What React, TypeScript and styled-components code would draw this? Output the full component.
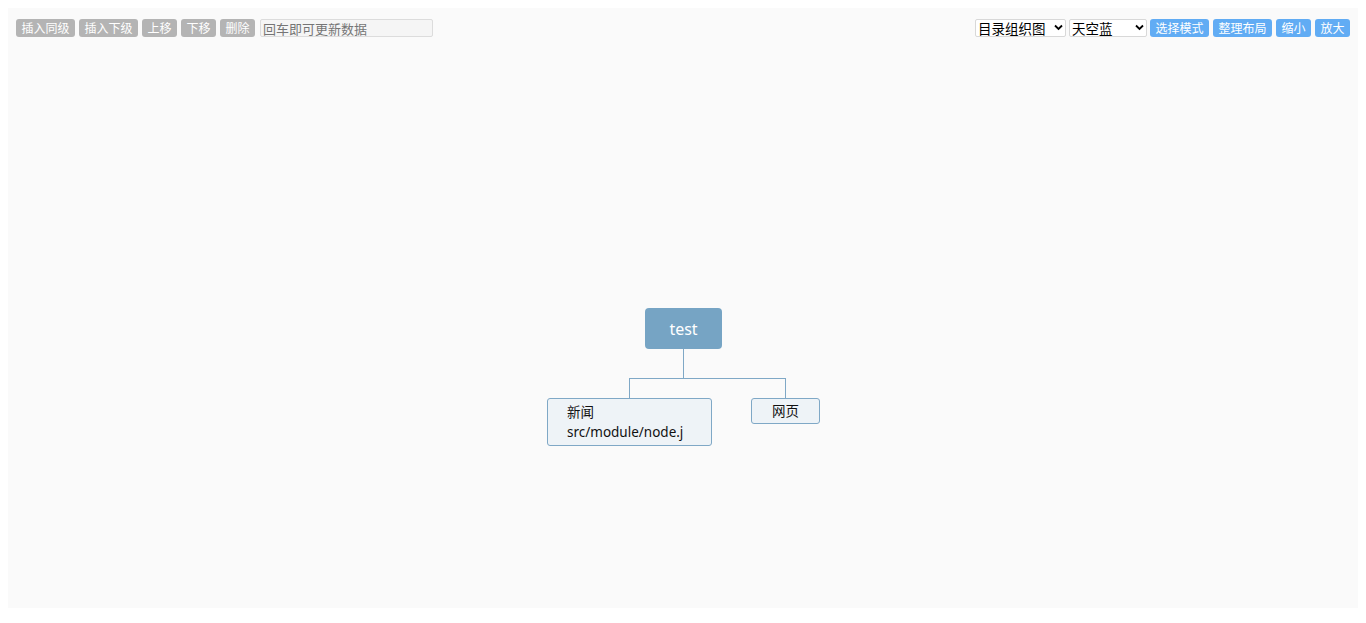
import React from "react";
import styled, { createGlobalStyle } from "styled-components";

const Global = createGlobalStyle`
  html, body { margin: 0; padding: 0; background: #ffffff; }
  body { padding: 8px; font-family: "Noto Sans", "Noto Sans CJK SC", sans-serif; }
`;

const Canvas = styled.div`
  position: relative;
  width: 1350px;
  height: 600px;
  background: #fafafa;
  overflow: hidden;
`;

const Toolbar = styled.div`
  display: flex;
  justify-content: space-between;
  align-items: center;
  padding: 11px 8px 0 8px;
`;

const Group = styled.div`
  display: flex;
  align-items: center;
  gap: 4px;
`;

const Btn = styled.button<{ $tone: "gray" | "blue" }>`
  height: 18px;
  padding: 0 5.5px;
  border: none;
  border-radius: 3px;
  background: ${(p) => (p.$tone === "gray" ? "#b4b4b4" : "#61acf4")};
  color: #ffffff;
  font-family: "Noto Sans CJK SC", sans-serif;
  font-size: 12px;
  line-height: 18px;
  cursor: pointer;
  white-space: nowrap;
`;

const Input = styled.input`
  box-sizing: border-box;
  width: 173px;
  height: 18px;
  margin-left: 1px;
  padding: 0 2px;
  border: 1px solid #dcdcdc;
  border-radius: 2px;
  background: #f5f5f5;
  font-family: "Noto Sans CJK SC", sans-serif;
  font-size: 13px;
  line-height: 16px;
  color: #333;
  &::placeholder { color: #757575; }
`;

const SelectWrap = styled.span<{ $w: number }>`
  position: relative;
  display: inline-block;
  width: ${(p) => p.$w}px;
  height: 18px;
  margin-right: -1px;
`;

const Select = styled.select`
  box-sizing: border-box;
  appearance: none;
  -webkit-appearance: none;
  width: 100%;
  height: 18px;
  margin: 0;
  padding: 0 14px 0 2px;
  border: 1px solid #d8d8d8;
  border-radius: 2px;
  background: #ffffff;
  font-family: "Noto Sans CJK SC", sans-serif;
  font-size: 13.5px;
  line-height: 16px;
  color: #000;
  display: block;
`;

const Chevron = styled.svg`
  position: absolute;
  right: 3px;
  top: 5px;
  pointer-events: none;
`;

const Lines = styled.svg`
  position: absolute;
  left: 0;
  top: 0;
  pointer-events: none;
`;

const RootNode = styled.div`
  position: absolute;
  box-sizing: border-box;
  display: flex;
  align-items: center;
  justify-content: center;
  width: 77px;
  height: 41px;
  border-radius: 4px;
  background: #76a4c4;
  color: #ffffff;
  font-family: "Noto Sans", "Noto Sans CJK SC", sans-serif;
  font-size: 16px;
`;

const ChildNode = styled.div<{ $center?: boolean }>`
  position: absolute;
  box-sizing: border-box;
  padding: ${(p) => (p.$center ? "2px 0" : "3px 19px")};
  text-align: ${(p) => (p.$center ? "center" : "left")};
  border: 1px solid #7fa8c6;
  border-radius: 3px;
  background: #eef3f7;
  color: #111;
  font-family: "Noto Sans", "Noto Sans CJK SC", sans-serif;
  font-size: 13.5px;
  line-height: 20px;
  white-space: pre;
`;

function Dropdown({ w, label }: { w: number; label: string }) {
  return (
    <SelectWrap $w={w}>
      <Select defaultValue="v">
        <option value="v">{label}</option>
      </Select>
      <Chevron width="9" height="7" viewBox="0 0 9 7">
        <path d="M1 1.5 L4.5 5 L8 1.5" stroke="#000" strokeWidth="1.8" fill="none" />
      </Chevron>
    </SelectWrap>
  );
}

export default function App() {
  return (
    <>
      <Global />
      <Canvas>
        <Toolbar>
          <Group>
            <Btn $tone="gray">插入同级</Btn>
            <Btn $tone="gray">插入下级</Btn>
            <Btn $tone="gray">上移</Btn>
            <Btn $tone="gray">下移</Btn>
            <Btn $tone="gray">删除</Btn>
            <Input placeholder="回车即可更新数据" />
          </Group>
          <Group>
            <Dropdown w={91} label="目录组织图" />
            <Dropdown w={78} label="天空蓝" />
            <Btn $tone="blue">选择模式</Btn>
            <Btn $tone="blue">整理布局</Btn>
            <Btn $tone="blue">缩小</Btn>
            <Btn $tone="blue">放大</Btn>
          </Group>
        </Toolbar>
        <Lines width="1350" height="600">
          <path
            d="M675.5 341 V370.5 M621.5 370.5 H777.5 M621.5 370 V390 M777.5 370 V390"
            stroke="#7fa8c6"
            strokeWidth="1"
            fill="none"
          />
        </Lines>
        <RootNode style={{ left: 637, top: 300 }}>test</RootNode>
        <ChildNode style={{ left: 539, top: 390, width: 165 }}>{"新闻\nsrc/module/node.j"}</ChildNode>
        <ChildNode $center style={{ left: 743, top: 390, width: 69, height: 26 }}>网页</ChildNode>
      </Canvas>
    </>
  );
}
